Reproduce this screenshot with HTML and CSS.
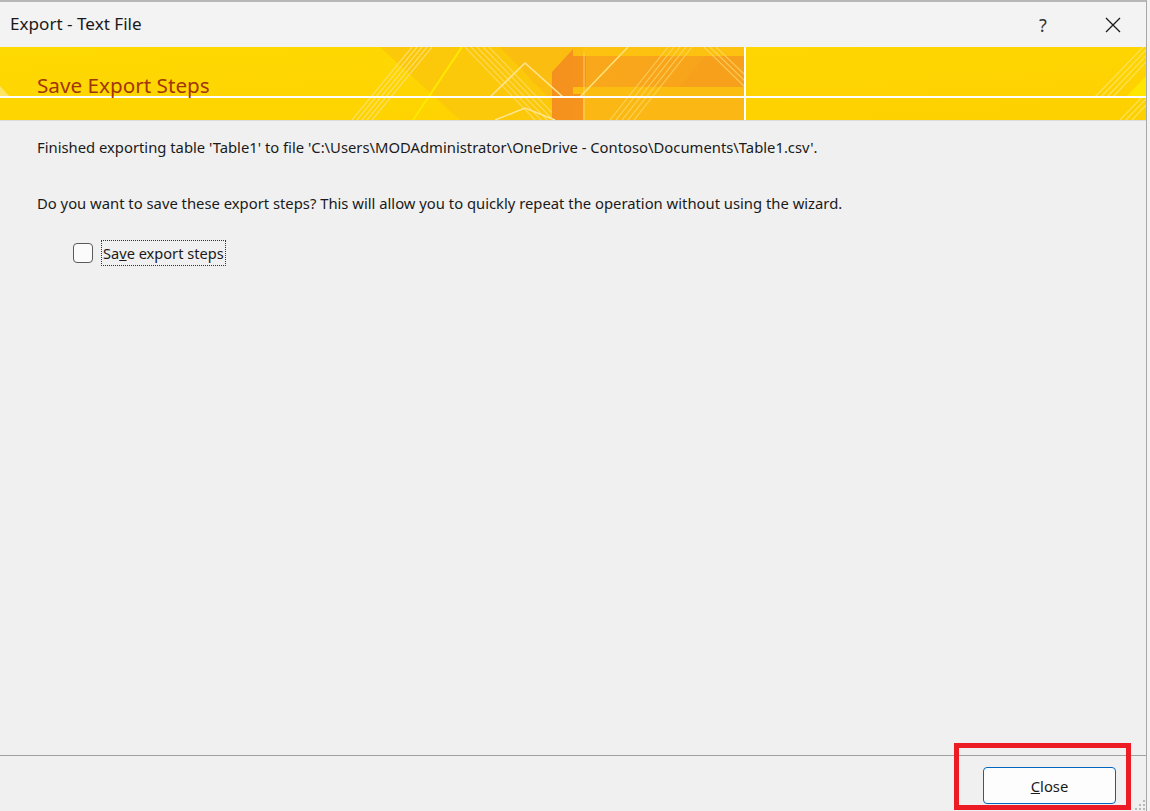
FILE: index.html
```html
<!DOCTYPE html>
<html lang="en">
<head>
    <meta charset="UTF-8">
    <meta name="viewport" content="width=device-width, initial-scale=1.0">
    <title>Export - Text File</title>
    <link rel="stylesheet" href="styles.css">
</head>
<body>

    <div class="window">
        <div class="titlebar">
            <div class="title">Export - Text File</div>
            <div class="title-buttons">
                <span class="help-btn">?</span>
                <span class="close-x">
                    <svg width="16" height="16" viewBox="0 0 16 16">
                        <path d="M1 1 L15 15 M15 1 L1 15" stroke="#1a1a1a" stroke-width="1.3" fill="none"/>
                    </svg>
                </span>
            </div>
        </div>

        <div class="banner">
            <!-- Hintergrundmuster des Banners -->
            <svg class="banner-art" width="1146" height="73" viewBox="0 0 1146 73" preserveAspectRatio="none">
                <defs>
                    <linearGradient id="bg" x1="0" y1="0" x2="1" y2="1">
                        <stop offset="0" stop-color="#ffd902"/>
                        <stop offset="1" stop-color="#fdd000"/>
                    </linearGradient>
                    <linearGradient id="arrow" x1="0" y1="0" x2="1" y2="0">
                        <stop offset="0" stop-color="#f5901e"/>
                        <stop offset="1" stop-color="#f9a81a"/>
                    </linearGradient>
                    <linearGradient id="shaft" x1="0" y1="0" x2="1" y2="0">
                        <stop offset="0" stop-color="#f9a71b"/>
                        <stop offset="1" stop-color="#f8a31c"/>
                    </linearGradient>
                </defs>
                <rect x="0" y="0" width="1146" height="73" fill="url(#bg)"/>
                <!-- Muster links -->
                <polygon points="380,0 745,0 745,73 460,73" fill="#fcc80a"/>
                <polygon points="0,39 10,50 0,50" fill="#ffe566"/>
                <g stroke="#ffe27a" stroke-width="1.2" opacity="0.8">
                    <line x1="352" y1="73" x2="412" y2="0"/>
                    <line x1="357" y1="73" x2="417" y2="0"/>
                    <line x1="362" y1="73" x2="422" y2="0"/>
                    <line x1="367" y1="73" x2="427" y2="0"/>
                    <line x1="372" y1="73" x2="432" y2="0"/>
                </g>
                <line x1="413" y1="73" x2="462" y2="0" stroke="#ffe800" stroke-width="2"/>
                <polygon points="500,0 745,0 745,73 570,73" fill="#fbbd10"/>
                <g stroke="#ffdc6a" stroke-width="1.2" opacity="0.8">
                    <line x1="465" y1="0" x2="535" y2="73"/>
                    <line x1="471" y1="0" x2="541" y2="73"/>
                    <line x1="477" y1="0" x2="547" y2="73"/>
                    <line x1="483" y1="0" x2="553" y2="73"/>
                    <line x1="489" y1="0" x2="559" y2="73"/>
                </g>
                <!-- Pfeil nach links -->
                <polygon points="552,25 573,2 573,9 745,9 745,40 573,40 573,47 583,47 583,73 552,73" fill="url(#arrow)"/>
                <polygon points="586,9 745,9 745,40 586,40" fill="url(#shaft)"/>
                <polygon points="583,0 745,0 745,9 583,9" fill="#fcc20f"/>
                <polygon points="583,50 745,50 745,73 583,73" fill="#fbb814"/>
                <line x1="584" y1="6" x2="584" y2="73" stroke="#fdd26a" stroke-width="1"/>
                <polygon points="705,9 745,9 745,40 680,40" fill="#f7a01c"/>
                <g stroke="#ffe27a" stroke-width="1.2" opacity="0.6">
                    <line x1="610" y1="73" x2="668" y2="0"/>
                    <line x1="616" y1="73" x2="674" y2="0"/>
                    <line x1="622" y1="73" x2="680" y2="0"/>
                    <line x1="628" y1="73" x2="686" y2="0"/>
                    <line x1="634" y1="73" x2="692" y2="0"/>
                    <line x1="704" y1="0" x2="745" y2="40"/>
                    <line x1="710" y1="0" x2="745" y2="34"/>
                    <line x1="716" y1="0" x2="745" y2="28"/>
                </g>
                <line x1="580" y1="50" x2="628" y2="0" stroke="#ffe47a" stroke-width="1.5"/>
                <polyline points="490,50 525,16 563,50" fill="none" stroke="#ffe590" stroke-width="1.6"/>
                <polyline points="495,73 525,61 555,73" fill="none" stroke="#ffe590" stroke-width="1.6"/>
                <!-- Streifen rechts -->
                <g stroke="#ffe56e" stroke-width="1.2" opacity="0.8">
                    <line x1="1095" y1="50" x2="1146" y2="-3"/>
                    <line x1="1101" y1="50" x2="1146" y2="3"/>
                    <line x1="1107" y1="50" x2="1146" y2="9"/>
                    <line x1="1113" y1="50" x2="1146" y2="15"/>
                    <line x1="1120" y1="73" x2="1146" y2="46"/>
                    <line x1="1126" y1="73" x2="1146" y2="52"/>
                    <line x1="1132" y1="73" x2="1146" y2="58"/>
                </g>
                <polygon points="1126,50 1146,29 1146,50" fill="#ffe600"/>
                <!-- weiße Linien -->
                <rect x="0" y="49" width="1146" height="2" fill="#ffffff"/>
                <rect x="744" y="0" width="2" height="73" fill="#ffffff"/>
            </svg>
            <div class="banner-title">Save Export Steps</div>
        </div>

        <div class="content">
            <p class="msg">Finished exporting table 'Table1' to file 'C:\Users\MODAdministrator\OneDrive - Contoso\Documents\Table1.csv'.</p>
            <p class="msg question">Do you want to save these export steps? This will allow you to quickly repeat the operation without using the wizard.</p>
            <label class="check-row">
                <span class="checkbox"></span>
                <span class="check-label">Sa<u>v</u>e export steps</span>
            </label>
        </div>

        <div class="footer">
            <button class="close-btn"><u>C</u>lose</button>
            <div class="highlight"></div>
            <svg class="grip" width="11" height="11" viewBox="0 0 11 11">
                <rect x="8" y="0" width="2" height="2" fill="#b8b8b8"/>
                <rect x="4" y="4" width="2" height="2" fill="#b8b8b8"/>
                <rect x="8" y="4" width="2" height="2" fill="#b8b8b8"/>
                <rect x="0" y="8" width="2" height="2" fill="#b8b8b8"/>
                <rect x="4" y="8" width="2" height="2" fill="#b8b8b8"/>
                <rect x="8" y="8" width="2" height="2" fill="#b8b8b8"/>
            </svg>
        </div>
    </div>

</body>
</html>
```

FILE: styles.css
```css
body {
    margin: 0;
    font-family: "Segoe UI", "Noto Sans", "Open Sans", sans-serif;
    background-color: #f3f3f3;
    width: 1150px;
    height: 811px;
    overflow: hidden;
}

.window {
    width: 1146px;
    height: 809px;
    border-top: 2px solid #b6b6b6;
    border-right: 1px solid #a8a8a8;
    background-color: #f0f0f0;
    display: flex;
    flex-direction: column;
}

.titlebar {
    height: 45px;
    background-color: #f3f3f3;
    display: flex;
    align-items: center;
    justify-content: space-between;
    padding-left: 10px;
}

.title {
    font-size: 17.1px;
    color: #1a1a1a;
    padding-bottom: 2px;
}

.title-buttons {
    display: flex;
    align-items: center;
}

.help-btn {
    font-size: 18px;
    color: #333;
    width: 70px;
    text-align: center;
    margin-right: 0;
}

.close-x {
    width: 70px;
    display: flex;
    justify-content: center;
    margin-right: -2px;
}

.banner {
    position: relative;
    height: 73px;
    border-bottom: 1px solid #dcdcdc;
    overflow: hidden;
}

.banner-art {
    position: absolute;
    left: 0;
    top: 0;
}

.banner-title {
    position: relative;
    padding: 24px 0 0 37px;
    font-size: 20.7px;
    color: #a1360a;
}

.content {
    flex: 1;
    padding: 12px 37px 0 37px;
    border-bottom: 1px solid #a0a0a0;
}

.msg {
    margin: 0;
    font-size: 14.8px;
    color: #1a1a1a;
    line-height: 28px;
}

.question {
    margin-top: 28px;
}

.check-row {
    display: flex;
    align-items: center;
    margin-top: 23px;
    margin-left: 36px;
}

.checkbox {
    width: 18px;
    height: 18px;
    border: 1px solid #5a5a5a;
    border-radius: 4px;
    background-color: #fbfbfb;
}

.check-label {
    margin-left: 8px;
    font-size: 14.6px;
    color: #1a1a1a;
    border: 1px dotted #333;
    padding: 0 1px;
    line-height: 24px;
}

.footer {
    position: relative;
    height: 55px;
    display: flex;
    justify-content: flex-end;
    align-items: flex-start;
}

.close-btn {
    margin-top: 11px;
    margin-right: 30px;
    width: 133px;
    height: 37px;
    background-color: #fdfdfd;
    border: 1px solid #0067c0;
    border-radius: 4px;
    font-family: "Segoe UI", "Noto Sans", "Open Sans", sans-serif;
    font-size: 14.8px;
    color: #1a1a1a;
}

.highlight {
    position: absolute;
    left: 954px;
    top: -13px;
    width: 167px;
    height: 57px;
    border: 5px solid #ed1c24;
}

.grip {
    position: absolute;
    right: 0;
    bottom: 0;
}
```
